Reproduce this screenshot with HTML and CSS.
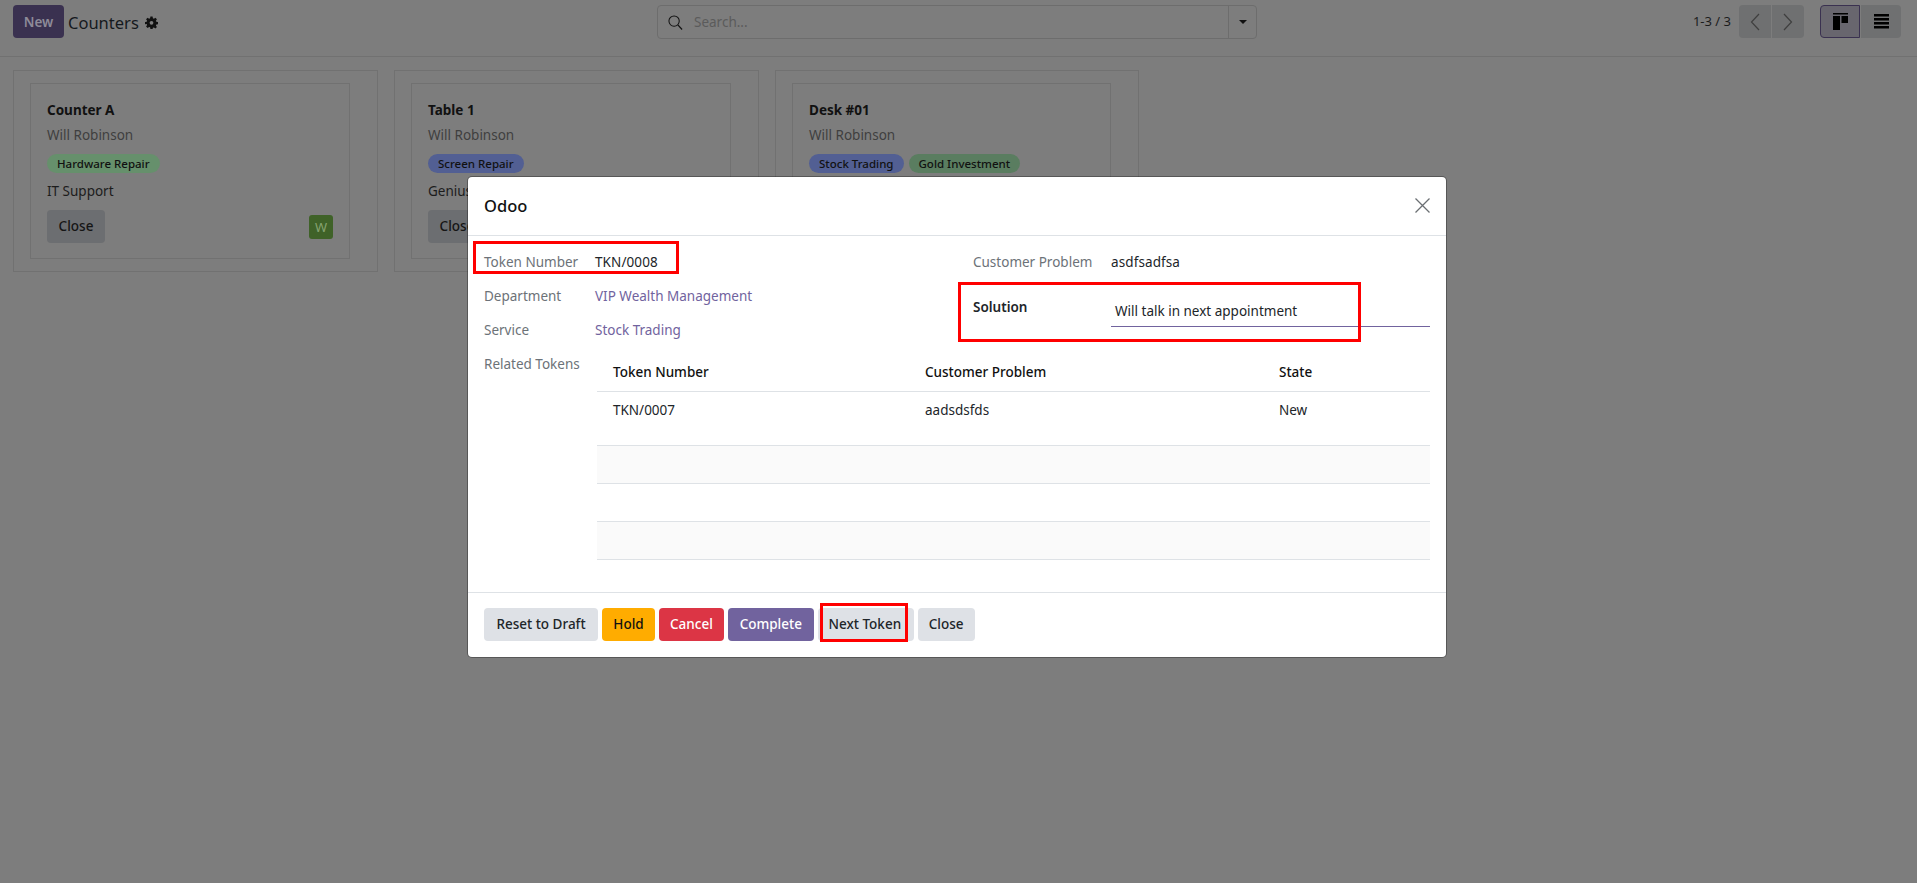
FILE: index.html
```html
<!DOCTYPE html>
<html>
<head>
    <title>Counters</title>
    <link rel="stylesheet" href="styles.css">
</head>
<body>

<div class="control-panel">
    <div class="cp-left">
        <button class="new-button">New</button>
        <span class="cp-title">Counters</span>
        <svg class="gear" viewBox="0 0 24 24"><path fill="#111" fill-rule="evenodd" d="M10 1h4l.6 3.2 1.9.8 2.7-1.9 2.8 2.8-1.9 2.7.8 1.900L24 11v4l-3.100.6-.8 1.900 1.900 2.700-2.800 2.800-2.700-1.900-1.900.8L14 24h-4l-.6-3.100-1.900-.8-2.700 1.900L2 19.200l1.900-2.700-.8-1.900L0 15v-4l3.100-.5.8-1.900L2 5.900l2.800-2.800 2.700 1.900 1.900-.8zM12 9a3.500 3.500 0 1 0 0 7 3.500 3.500 0 0 0 0-7z"/></svg>
    </div>
    <div class="search-box">
        <svg class="search-icon" viewBox="0 0 16 16"><circle cx="6.500" cy="6.500" r="5.500" fill="none" stroke="#111" stroke-width="1.100"/><path d="M10.500 10.500L15 15.500" stroke="#111" stroke-width="1.300"/></svg>
        <span class="search-text">Search...</span>
        <div class="search-caret"><span class="caret"></span></div>
    </div>
    <div class="cp-right">
        <span class="pager-text">1-3 / 3</span>
        <div class="btn-group">
            <div class="cp-btn pager-btn">
                <svg width="10" height="18" viewBox="0 0 10 18"><path d="M9 1L1.500 9 9 17" fill="none" stroke="#3f3f3f" stroke-width="1.200"/></svg>
            </div>
            <div class="cp-btn pager-btn">
                <svg width="10" height="18" viewBox="0 0 10 18"><path d="M1 1l7.500 8L1 17" fill="none" stroke="#3f3f3f" stroke-width="1.200"/></svg>
            </div>
        </div>
        <div class="btn-group view-group">
            <div class="cp-btn view-btn active">
                <svg width="15" height="17" viewBox="0 0 15 17"><path d="M0 0h15v1.500H0zM0 3h7v14H0zM8.500 3H15v7H8.500z" fill="#000"/></svg>
            </div>
            <div class="cp-btn view-btn">
                <svg width="15" height="15" viewBox="0 0 15 15"><path d="M0 0h15v2.500H0zM0 4h15v2.500H0zM0 8h15v2.500H0zM0 12h15v2.500H0z" fill="#000"/></svg>
            </div>
        </div>
    </div>
</div>

<div class="kanban">
    <div class="outer-card">
        <div class="inner-card">
            <div class="card-title">Counter A</div>
            <div class="card-name">Will Robinson</div>
            <div class="pills">
                <span class="pill green">Hardware Repair</span>
            </div>
            <div class="card-line">IT Support</div>
            <div class="card-foot">
                <span class="card-close">Close</span>
                <span class="badge">W</span>
            </div>
        </div>
    </div>
    <div class="outer-card">
        <div class="inner-card">
            <div class="card-title">Table 1</div>
            <div class="card-name">Will Robinson</div>
            <div class="pills">
                <span class="pill blue">Screen Repair</span>
            </div>
            <div class="card-line">Genius Bar</div>
            <div class="card-foot">
                <span class="card-close">Close</span>
            </div>
        </div>
    </div>
    <div class="outer-card">
        <div class="inner-card">
            <div class="card-title">Desk #01</div>
            <div class="card-name">Will Robinson</div>
            <div class="pills">
                <span class="pill blue">Stock Trading</span>
                <span class="pill dark-green">Gold Investment</span>
            </div>
        </div>
    </div>
</div>

<div class="backdrop">
    <div class="modal">
        <div class="modal-header">
            <span class="modal-title">Odoo</span>
            <svg class="modal-x" width="15" height="15" viewBox="0 0 15 15"><path d="M.5.500l14 14M14.500.500l-14 14" stroke="#6b6f73" stroke-width="1.300"/></svg>
        </div>

        <div class="modal-body">
            <div class="groups">
                <div class="group-left">
                    <div class="row"><span class="label">Token Number</span><span class="value">TKN/0008</span></div>
                    <div class="row"><span class="label">Department</span><a class="link">VIP Wealth Management</a></div>
                    <div class="row"><span class="label">Service</span><a class="link">Stock Trading</a></div>
                </div>
                <div class="group-right">
                    <div class="row"><span class="label">Customer Problem</span><span class="value">asdfsadfsa</span></div>
                    <div class="row solution-row">
                        <span class="label strong">Solution</span>
                        <div class="solution-input">Will talk in next appointment</div>
                    </div>
                </div>
            </div>
            <div class="related">
                <span class="label">Related Tokens</span>
                <table class="token-table">
                    <colgroup>
                        <col class="col-a">
                        <col class="col-b">
                        <col>
                    </colgroup>
                    <thead>
                        <tr>
                            <th>Token Number</th>
                            <th>Customer Problem</th>
                            <th>State</th>
                        </tr>
                    </thead>
                    <tbody>
                        <tr class="first-row">
                            <td>TKN/0007</td>
                            <td>aadsdsfds</td>
                            <td>New</td>
                        </tr>
                        <tr class="striped"><td></td><td></td><td></td></tr>
                        <tr><td></td><td></td><td></td></tr>
                        <tr class="striped"><td></td><td></td><td></td></tr>
                    </tbody>
                </table>
            </div>
        </div>

        <div class="modal-footer">
            <button class="btn btn-gray btn-reset">Reset to Draft</button>
            <button class="btn btn-hold">Hold</button>
            <button class="btn btn-cancel">Cancel</button>
            <button class="btn btn-complete">Complete</button>
            <button class="btn btn-gray btn-next">Next Token</button>
            <button class="btn btn-gray">Close</button>
        </div>

        <!-- red boxes drawn on the screenshot -->
        <div class="mark mark-token"></div>
        <div class="mark mark-solution"></div>
        <div class="mark mark-next"></div>
    </div>
</div>

</body>
</html>
```

FILE: styles.css
```css
* {
    box-sizing: border-box;
}

body {
    margin: 0;
    height: 883px;
    overflow: hidden;
    position: relative;
    background-color: #7d7d7d;
    font-family: "Noto Sans", sans-serif;
    font-size: 13.5px;
    color: #111;
}

/* Top bar */
.control-panel {
    display: grid;
    grid-template-columns: 644px 600px 1fr;
    height: 57px;
    padding: 5px 16px 0 13px;
    border-bottom: 1px solid #717171;
}

.cp-left {
    display: flex;
    align-items: flex-start;
}

.new-button {
    width: 51px;
    height: 33px;
    border: none;
    border-radius: 4px;
    background-color: #3a3150;
    color: #8e8b99;
    font-family: inherit;
    font-size: 13.5px;
    font-weight: 600;
    padding: 0;
}

.cp-title {
    margin-left: 4px;
    font-size: 16.500px;
    line-height: 35px;
    color: #15191d;
}

.gear {
    width: 13px;
    height: 13px;
    margin: 11px 0 0 6px;
}

.search-box {
    display: flex;
    align-items: center;
    height: 34px;
    border: 1px solid #6d6d6d;
    border-radius: 4px;
}

.search-icon {
    width: 15px;
    height: 15px;
    margin-left: 10px;
}

.search-text {
    margin-left: 11px;
    flex: 1;
    color: #5b5b5b;
}

.search-caret {
    display: flex;
    align-items: center;
    justify-content: center;
    width: 28px;
    height: 100%;
    border-left: 1px solid #6d6d6d;
}

.caret {
    width: 0;
    height: 0;
    border-left: 4px solid transparent;
    border-right: 4px solid transparent;
    border-top: 4px solid #111;
}

.cp-right {
    display: flex;
    justify-content: flex-end;
    align-items: flex-start;
}

.pager-text {
    margin-right: 8px;
    line-height: 33px;
    font-size: 13px;
    color: #1c1c1c;
}

.btn-group {
    display: flex;
    gap: 1px;
}

.view-group {
    margin-left: 16px;
}

.cp-btn {
    display: flex;
    align-items: center;
    justify-content: center;
    height: 33px;
    background-color: #6f7071;
}

.pager-btn {
    width: 32px;
}

.pager-btn:first-child,
.view-btn:first-child {
    border-radius: 4px 0 0 4px;
}

.pager-btn:last-child,
.view-btn:last-child {
    border-radius: 0 4px 4px 0;
}

.view-btn {
    width: 40px;
}

.view-btn.active {
    background-color: #68666e;
    border: 1px solid #3a3150;
}

/* Cards behind the dialog */
.kanban {
    display: flex;
    gap: 16px;
    padding: 13px 0 0 13px;
}

.outer-card {
    width: 365px;
    height: 202px;
    padding: 12px 27px 12px 16px;
    border: 1px solid #717171;
}

.outer-card:last-child {
    width: 364px;
}

.inner-card {
    height: 176px;
    padding: 16px;
    border: 1px solid #717171;
}

.card-title {
    line-height: 20px;
    font-weight: 700;
    color: #111;
}

.card-name {
    margin-top: 5px;
    line-height: 20px;
    color: #3f3f3f;
}

.pills {
    display: flex;
    gap: 5px;
    margin-top: 9px;
}

.pill {
    height: 19px;
    padding: 0 10px;
    border-radius: 10px;
    font-size: 11.500px;
    font-weight: 500;
    line-height: 19px;
    color: #111;
}

.pill.green {
    background-color: #66906c;
}

.pill.blue {
    background-color: #525f93;
}

.pill.dark-green {
    background-color: #5a7d60;
}

.card-line {
    margin-top: 8px;
    line-height: 20px;
    color: #1c1c1c;
}

.card-foot {
    display: flex;
    justify-content: space-between;
    align-items: center;
    margin-top: 9px;
}

.card-close {
    width: 58px;
    height: 33px;
    border-radius: 4px;
    background-color: #6c6e71;
    font-weight: 500;
    line-height: 33px;
    text-align: center;
    color: #151515;
}

.badge {
    width: 24px;
    height: 24px;
    border-radius: 3px;
    background-color: #3f6228;
    color: #86a270;
    font-size: 13px;
    line-height: 24px;
    text-align: center;
}

/* Dialog */
.backdrop {
    position: absolute;
    top: 0;
    left: 0;
    right: 0;
    bottom: 0;
    padding: 177px 0 0 468px;
}

.modal {
    position: relative;
    width: 978px;
    height: 480px;
    border-radius: 4px;
    background-color: #fff;
    box-shadow: 0 0 0 1px rgba(0, 0, 0, 0.3);
    color: #212529;
    font-size: 13.500px;
}

.modal-header {
    display: flex;
    justify-content: space-between;
    align-items: center;
    height: 59px;
    padding: 0 16px 1px;
    border-bottom: 1px solid #dee2e6;
}

.modal-title {
    font-size: 16.500px;
    font-weight: 500;
    line-height: 22px;
    color: #111;
}

.modal-body {
    height: 356px;
    padding: 9px 16px 0;
}

.groups {
    display: grid;
    grid-template-columns: 489px 1fr;
    height: 102px;
}

.row {
    display: flex;
    align-items: center;
    height: 34px;
}

.label {
    flex: none;
    width: 111px;
    color: #6c7278;
}

.value {
    letter-spacing: 0.1px;
}

.group-right .label {
    width: 138px;
}

.label.strong {
    align-self: flex-start;
    line-height: 34px;
    font-weight: 600;
    color: #212529;
}

.link {
    color: #71639e;
}

.solution-row {
    height: 37px;
    margin-top: 11px;
    align-items: flex-start;
}

.solution-input {
    flex: 1;
    height: 37px;
    padding: 11px 0 0 4px;
    border-bottom: 1px solid #71639e;
    line-height: 20px;
}

.related {
    display: flex;
}

.related .label {
    width: 113px;
    line-height: 34px;
}

.token-table {
    flex: 1;
    margin-top: 6px;
    border-collapse: collapse;
    table-layout: fixed;
}

.col-a {
    width: 312px;
}

.col-b {
    width: 354px;
}

.token-table th {
    height: 38px;
    padding: 0 0 0 16px;
    text-align: left;
    font-weight: 500;
    color: #111;
    border-bottom: 1px solid #dee2e6;
}

.token-table td {
    height: 38px;
    padding: 0 0 0 16px;
    border-bottom: 1px solid #dee2e6;
}

.token-table .first-row td {
    height: 54px;
    padding-bottom: 16px;
}

.token-table .striped td {
    background-color: #fafafa;
}

.modal-footer {
    display: flex;
    gap: 4px;
    height: 65px;
    padding: 15px 16px;
    border-top: 1px solid #dee2e6;
}

.btn {
    height: 33px;
    padding: 0 11px 2px;
    border: none;
    border-radius: 4px;
    font-family: inherit;
    font-size: 13.500px;
    font-weight: 500;
}

.btn-reset {
    width: 114px;
    padding-inline: 0;
}

.btn-complete {
    width: 86px;
    padding-inline: 0;
}

.btn-next {
    width: 96px;
    padding-inline: 10px 12px;
}

.btn-gray {
    background-color: #dee1e6;
    color: #212529;
}

.btn-hold {
    width: 53px;
    padding-inline: 0;
    background-color: #ffac00;
    color: #111;
}

.btn-cancel {
    background-color: #dc3545;
    color: #fff;
}

.btn-complete {
    background-color: #71639e;
    color: #fff;
}

.mark {
    position: absolute;
    border: 3px solid #f00;
}

.mark-token {
    left: 5px;
    top: 64px;
    width: 206px;
    height: 33px;
}

.mark-solution {
    left: 490px;
    top: 105px;
    width: 403px;
    height: 60px;
}

.mark-next {
    left: 352px;
    top: 426px;
    width: 88px;
    height: 39px;
}
```
